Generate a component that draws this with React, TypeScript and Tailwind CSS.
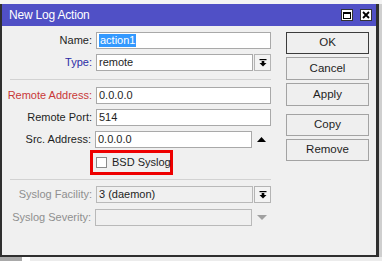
import React from 'react';

const font = "font-['Liberation_Sans',Arial,sans-serif]";

function DropIcon({ muted }: { muted?: boolean }) {
  return (
    <svg width="8" height="8" viewBox="0 0 8 8" className={muted ? 'text-[#9a9a9a]' : 'text-black'}>
      <rect x="0.5" y="0" width="7" height="1.2" fill="currentColor" />
      <rect x="2.7" y="2" width="2.6" height="2" fill="currentColor" />
      <polygon points="0.5,4 7.5,4 4,7.6" fill="currentColor" />
    </svg>
  );
}

function Row({ label, color, mt, children }: { label: string; color: string; mt: string; children: React.ReactNode }) {
  return (
    <div className={`flex items-center h-[17px] ${mt}`}>
      <div className={`w-[90px] text-right text-[11px] leading-none whitespace-nowrap ${color}`}>{label}</div>
      <div className="ml-[4px] flex items-center">{children}</div>
    </div>
  );
}

function Field({ value, wide, disabled }: { value?: React.ReactNode; wide?: boolean; disabled?: boolean }) {
  return (
    <div
      className={`h-[17px] ${wide ? 'w-[175px]' : 'w-[157px]'} border ${
        disabled ? 'border-[#b9b9b9] bg-[#f0f0f0]' : 'border-[#a9a9a9] bg-white'
      } pl-[2px] flex items-center text-[11px] leading-none text-[#1e1e1e] whitespace-nowrap`}
    >
      {value}
    </div>
  );
}

function DropButton() {
  return (
    <div className="ml-px w-[17px] h-[17px] border border-[#b4b4b4] bg-[#f3f3f3] flex items-center justify-center">
      <DropIcon />
    </div>
  );
}

function Btn({ label, def, cls }: { label: string; def?: boolean; cls: string }) {
  return (
    <div
      className={`w-[83px] ${cls} flex items-center justify-center text-[11.5px] text-[#1e1e1e] bg-[#efefef] border ${
        def ? 'border-[#3c3c3c]' : 'border-[#a3a3a3]'
      }`}
    >
      {label}
    </div>
  );
}

export default function App() {
  return (
    <div className={`w-[382px] h-[261px] bg-[#cfcfcf] overflow-hidden ${font}`}>
      <div className="h-[4px] bg-[#f4f4f4]" />
      <div className="w-[379px] h-[253px] border-l-2 border-r-[3px] border-b-2 border-[#2f2f2f] bg-[#f0f0f0] flex flex-col">
        <div className="h-[22px] bg-[#5050c6] flex items-center pl-[7px] pr-[4px]">
          <span className="text-white text-[12px] leading-none tracking-[-0.2px]">New Log Action</span>
          <div className="ml-auto flex items-center gap-[7px]">
            <div className="w-[12px] h-[12px] bg-white border border-[#333] flex items-center justify-center">
              <div className="w-[8px] h-[7px] border border-black border-t-2" />
            </div>
            <div className="w-[12px] h-[12px] bg-white border border-[#333] flex items-center justify-center">
              <svg width="8" height="8" viewBox="0 0 8 8">
                <path d="M1 1 L7 7 M7 1 L1 7" stroke="black" strokeWidth="1.8" />
              </svg>
            </div>
          </div>
        </div>

        <div className="flex flex-1">
          <div className="w-[269px] pt-[6px] flex flex-col">
            <Row label="Name:" color="text-[#1e1e1e]" mt="">
              <Field
                wide
                value={<span className="bg-[#3399ff] text-white px-px leading-[13px]">action1</span>}
              />
            </Row>
            <Row label="Type:" color="text-[#2c2ca6]" mt="mt-[5px]">
              <Field value="remote" />
              <DropButton />
            </Row>
            <div className="ml-[8px] mt-[8px] h-px bg-[#d2d2d2]" />
            <Row label="Remote Address:" color="text-[#c93838]" mt="mt-[7px]">
              <Field wide value="0.0.0.0" />
            </Row>
            <Row label="Remote Port:" color="text-[#1e1e1e]" mt="mt-[5px]">
              <Field wide value="514" />
            </Row>
            <Row label="Src. Address:" color="text-[#1e1e1e]" mt="mt-[5px]">
              <Field value="0.0.0.0" />
              <div className="w-[19px] flex justify-center">
                <svg width="9" height="5" viewBox="0 0 9 5">
                  <polygon points="0,5 9,5 4.5,0" fill="black" />
                </svg>
              </div>
            </Row>
            <div className="ml-[88px] mt-[2px] w-[83px] h-[25px] border-[3px] border-[#ee0000] flex items-center pl-[3px] whitespace-nowrap">
              <div className="w-[11px] h-[11px] shrink-0 bg-white border border-[#8a8a8a]" />
              <span className="ml-[5px] text-[11px] leading-none text-[#1e1e1e]">BSD Syslog</span>
            </div>
            <div className="ml-[8px] mt-[4px] h-px bg-[#d2d2d2]" />
            <Row label="Syslog Facility:" color="text-[#8f8f8f]" mt="mt-[6px]">
              <Field disabled value="3 (daemon)" />
              <DropButton />
            </Row>
            <Row label="Syslog Severity:" color="text-[#8f8f8f]" mt="mt-[6px]">
              <Field disabled />
              <div className="w-[19px] flex justify-center">
                <svg width="10" height="5" viewBox="0 0 10 5">
                  <polygon points="0,0 10,0 5,5" fill="#a0a0a0" />
                </svg>
              </div>
            </Row>
          </div>

          <div className="ml-[15px] pt-[6px] flex flex-col">
            <Btn label="OK" def cls="h-[22px]" />
            <Btn label="Cancel" cls="h-[23px] mt-[3px]" />
            <Btn label="Apply" cls="h-[23px] mt-[3px]" />
            <Btn label="Copy" cls="h-[22px] mt-[8px]" />
            <Btn label="Remove" cls="h-[22px] mt-[3px]" />
          </div>
        </div>
      </div>
      <div className="flex h-[4px]">
        <div className="w-[22px] bg-[#a9a9a9]" />
        <div className="w-[8px] bg-white" />
        <div className="flex-1 bg-[#ececec]" />
      </div>
    </div>
  );
}
